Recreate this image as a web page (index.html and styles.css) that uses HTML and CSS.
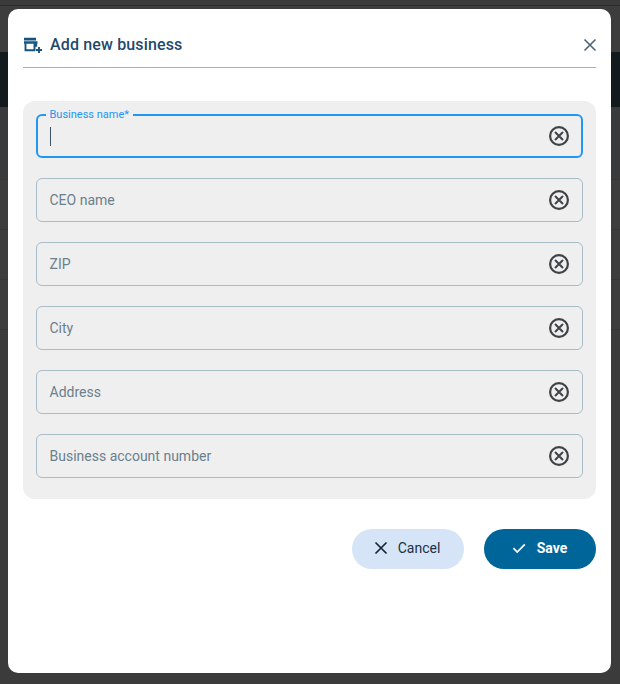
FILE: index.html
```html
<!DOCTYPE html>
<html lang="en">
<head>
<meta charset="utf-8">
<title>Add new business</title>
<link rel="stylesheet" href="styles.css">
</head>
<body>
<div class="backdrop" aria-hidden="true">
  <div class="bd-top"></div>
  <div class="bd-gap"></div>
  <div class="bd-band"></div>
  <div class="bd-rows">
    <div class="bd-row bd-first"></div>
    <div class="bd-row"></div>
    <div class="bd-row"></div>
    <div class="bd-row"></div>
  </div>
</div>
<div class="modal">
  <header class="modal-head">
    <svg class="title-icon" viewBox="0 0 19 19" width="19" height="19"><path fill="#15557f" d="M1 2.7h12v2.8H1zM1 6.3h13.5v2.4H1z"/><path d="M2.5 8.3v6.9h9V8.3M13.2 8.3v3.4" fill="none" stroke="#15557f" stroke-width="1.9"/><path d="M16 12v6M13 15h6" fill="none" stroke="#15557f" stroke-width="1.9"/></svg>
    <h1 class="title">Add new business</h1>
    <svg class="close-icon" viewBox="0 0 14 14" width="14" height="14"><path d="M1.5 1.5l11 11M12.5 1.5l-11 11" fill="none" stroke="#4f6474" stroke-width="1.6"/></svg>
  </header>
  <form class="panel">
    <div class="field focused">
      <span class="legend">Business name*</span>
      <span class="caret"></span>
      <svg class="clear" viewBox="0 0 20 20" width="20" height="20"><circle cx="10" cy="10" r="8.9" fill="none" stroke="#3f4347" stroke-width="2.2"/><path d="M6 6l8 8M14 6l-8 8" fill="none" stroke="#3f4347" stroke-width="2"/></svg>
    </div>
    <div class="field">
      <span class="placeholder">CEO name</span>
      <svg class="clear" viewBox="0 0 20 20" width="20" height="20"><circle cx="10" cy="10" r="8.9" fill="none" stroke="#3f4347" stroke-width="2.2"/><path d="M6 6l8 8M14 6l-8 8" fill="none" stroke="#3f4347" stroke-width="2"/></svg>
    </div>
    <div class="field">
      <span class="placeholder">ZIP</span>
      <svg class="clear" viewBox="0 0 20 20" width="20" height="20"><circle cx="10" cy="10" r="8.9" fill="none" stroke="#3f4347" stroke-width="2.2"/><path d="M6 6l8 8M14 6l-8 8" fill="none" stroke="#3f4347" stroke-width="2"/></svg>
    </div>
    <div class="field">
      <span class="placeholder">City</span>
      <svg class="clear" viewBox="0 0 20 20" width="20" height="20"><circle cx="10" cy="10" r="8.9" fill="none" stroke="#3f4347" stroke-width="2.2"/><path d="M6 6l8 8M14 6l-8 8" fill="none" stroke="#3f4347" stroke-width="2"/></svg>
    </div>
    <div class="field">
      <span class="placeholder">Address</span>
      <svg class="clear" viewBox="0 0 20 20" width="20" height="20"><circle cx="10" cy="10" r="8.9" fill="none" stroke="#3f4347" stroke-width="2.2"/><path d="M6 6l8 8M14 6l-8 8" fill="none" stroke="#3f4347" stroke-width="2"/></svg>
    </div>
    <div class="field">
      <span class="placeholder">Business account number</span>
      <svg class="clear" viewBox="0 0 20 20" width="20" height="20"><circle cx="10" cy="10" r="8.9" fill="none" stroke="#3f4347" stroke-width="2.2"/><path d="M6 6l8 8M14 6l-8 8" fill="none" stroke="#3f4347" stroke-width="2"/></svg>
    </div>
  </form>
  <div class="actions">
    <button type="button" class="btn btn-cancel">
      <svg viewBox="0 0 14 14" width="14" height="14"><path d="M1.5 1.5l11 11M12.5 1.5l-11 11" fill="none" stroke="#14273a" stroke-width="1.7"/></svg>
      Cancel
    </button>
    <button type="button" class="btn btn-save">
      <svg viewBox="0 0 16 14" width="16" height="14"><path d="M2.4 7.2l3.8 3.8L13.8 3.4" fill="none" stroke="#fff" stroke-width="1.7"/></svg>
      Save
    </button>
  </div>
</div>
</body>
</html>
```

FILE: styles.css
```css
* { box-sizing: border-box; }
html, body { margin: 0; height: 100%; }
body {
  position: relative;
  width: 620px;
  height: 684px;
  overflow: hidden;
  background: #3b3b3b;
  font-family: Roboto, "Liberation Sans", sans-serif;
}
.backdrop { display: flex; flex-direction: column; height: 684px; }
.bd-top { height: 6px; background: #3a3a3a; border-bottom: 1px solid #2c2c2c; }
.bd-gap { height: 46px; background: #3d3d3d; }
.bd-band { height: 55px; background: #131a1e; }
.bd-rows { flex: 1; display: flex; flex-direction: column; }
.bd-row { height: 50px; border-bottom: 1px solid #363636; background: #3d3d3d; }
.bd-first { height: 73px; background: #383a3c; }

.modal {
  position: absolute;
  left: 8px;
  top: 9px;
  width: 603px;
  height: 664px;
  background: #fff;
  border-radius: 10px;
  padding: 0 15px;
  display: flex;
  flex-direction: column;
}
.modal-head {
  height: 59px;
  flex: none;
  display: flex;
  align-items: center;
  border-bottom: 1px solid #adadad;
  padding-top: 13px;
}
.title-icon { flex: none; margin-right: 8px; }
.title {
  flex: 1;
  margin: 0;
  font-size: 16px;
  font-weight: 500;
  letter-spacing: 0.15px;
  color: #1f4a6b;
}
.close-icon { flex: none; margin-right: -1px; }

.panel {
  margin-top: 33px;
  height: 398px;
  flex: none;
  padding: 13px 13px 0;
  border-radius: 12px;
  background: #efefef;
  display: flex;
  flex-direction: column;
  gap: 20px;
}
.field {
  position: relative;
  height: 44px;
  flex: none;
  display: flex;
  align-items: center;
  justify-content: space-between;
  padding: 0 13px 0 12.5px;
  border: 1px solid #a9bcc7;
  border-radius: 6px;
}
.field.focused { border: 2px solid #2196f3; padding: 0 12px 0 12px; }
.placeholder { font-size: 14px; color: #6b7f8c; }
.legend {
  position: absolute;
  left: 7.5px;
  top: -8px;
  padding: 0 4px;
  background: #efefef;
  font-size: 11px;
  line-height: 14px;
  color: #2196f3;
}
.caret { width: 1px; height: 19px; background: #3e5468; }
.clear { flex: none; margin-left: auto; }

.actions {
  margin-top: 30px;
  display: flex;
  justify-content: flex-end;
  gap: 20px;
}
.btn {
  width: 112px;
  height: 40px;
  border: 0;
  border-radius: 20px;
  display: flex;
  align-items: center;
  justify-content: center;
  gap: 10px;
  padding: 0 2px 2px 0;
  font-family: inherit;
  font-size: 14px;
}
.btn-cancel { background: #d6e4f7; color: #1b2f45; }
.btn-save { background: #006599; color: #fff; font-weight: 700; }
```
